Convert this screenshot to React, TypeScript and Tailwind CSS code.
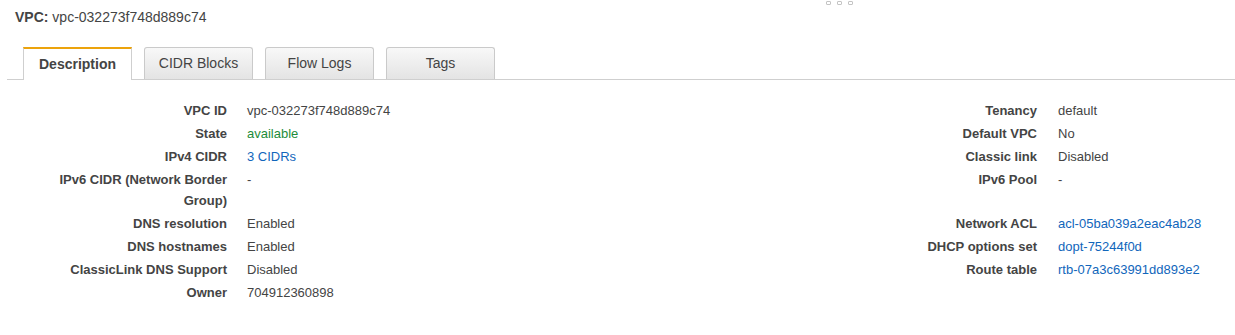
import React from "react";

type Cell = { text: string; color?: "green" | "link" };
type Row = { l1: string; v1: Cell; l2?: string; v2?: Cell };

const ROWS: Row[] = [
  { l1: "VPC ID", v1: { text: "vpc-032273f748d889c74" }, l2: "Tenancy", v2: { text: "default" } },
  { l1: "State", v1: { text: "available", color: "green" }, l2: "Default VPC", v2: { text: "No" } },
  { l1: "IPv4 CIDR", v1: { text: "3 CIDRs", color: "link" }, l2: "Classic link", v2: { text: "Disabled" } },
  { l1: "IPv6 CIDR (Network Border Group)", v1: { text: "-" }, l2: "IPv6 Pool", v2: { text: "-" } },
  { l1: "DNS resolution", v1: { text: "Enabled" }, l2: "Network ACL", v2: { text: "acl-05ba039a2eac4ab28", color: "link" } },
  { l1: "DNS hostnames", v1: { text: "Enabled" }, l2: "DHCP options set", v2: { text: "dopt-75244f0d", color: "link" } },
  { l1: "ClassicLink DNS Support", v1: { text: "Disabled" }, l2: "Route table", v2: { text: "rtb-07a3c63991dd893e2", color: "link" } },
  { l1: "Owner", v1: { text: "704912360898" } },
];

const TABS = ["Description", "CIDR Blocks", "Flow Logs", "Tags"];

function Value({ cell }: { cell?: Cell }) {
  if (!cell) return <div />;
  const cls =
    cell.color === "green" ? "text-[#1d8c3a]" : cell.color === "link" ? "text-[#1166bb] cursor-pointer" : "text-[#444]";
  return <div className={`py-px ${cls}`}>{cell.text}</div>;
}

export default function App() {
  return (
    <div className="relative w-[1235px] h-[335px] bg-white text-[#444]" style={{ fontFamily: '"Liberation Sans", Arial, sans-serif' }}>
      {/* header */}
      <div className="pt-[8px] pl-[15px] text-[14px] leading-[18px]">
        <span className="font-bold">VPC:</span> vpc-032273f748d889c74
      </div>
      {/* drag handle */}
      <div className="absolute left-[826px] top-[1px] flex gap-[6px]">
        <div className="w-[5px] h-[4px] rounded-[1px] border border-[#c4c4c4]" />
        <div className="w-[5px] h-[4px] rounded-[1px] border border-[#c4c4c4]" />
        <div className="w-[5px] h-[4px] rounded-[1px] border border-[#c4c4c4]" />
      </div>

      {/* tabs */}
      <div className="mt-[21px] ml-[7px] flex gap-[12px] pl-[16px] border-b border-[#cfcfcf]">
        {TABS.map((t, i) =>
          i === 0 ? (
            <div
              key={t}
              className="-mb-px w-[109px] h-[33px] flex items-center justify-center bg-white border-t-2 border-t-[#eca30c] border-x border-x-[#cfcfcf] text-[14px] font-bold text-[#444]"
            >
              {t}
            </div>
          ) : (
            <div
              key={t}
              className="w-[109px] h-[32px] flex items-center justify-center rounded-t-[3px] border border-b-0 border-[#cacaca] bg-gradient-to-b from-[#f8f8f8] to-[#e4e4e4] text-[14px] text-[#444] cursor-pointer"
            >
              {t}
            </div>
          )
        )}
      </div>

      {/* details */}
      <div className="pt-[19px] pl-[47px] grid grid-cols-[180px_570px_200px_1fr] gap-x-[20px] text-[13px] leading-[21px]">
        {ROWS.map((r) => (
          <React.Fragment key={r.l1}>
            <div className="py-px text-right font-bold text-[#444]">{r.l1}</div>
            <Value cell={r.v1} />
            <div className="py-px text-right font-bold text-[#444]">{r.l2 ?? ""}</div>
            <div className="pl-px"><Value cell={r.v2} /></div>
          </React.Fragment>
        ))}
      </div>
    </div>
  );
}
